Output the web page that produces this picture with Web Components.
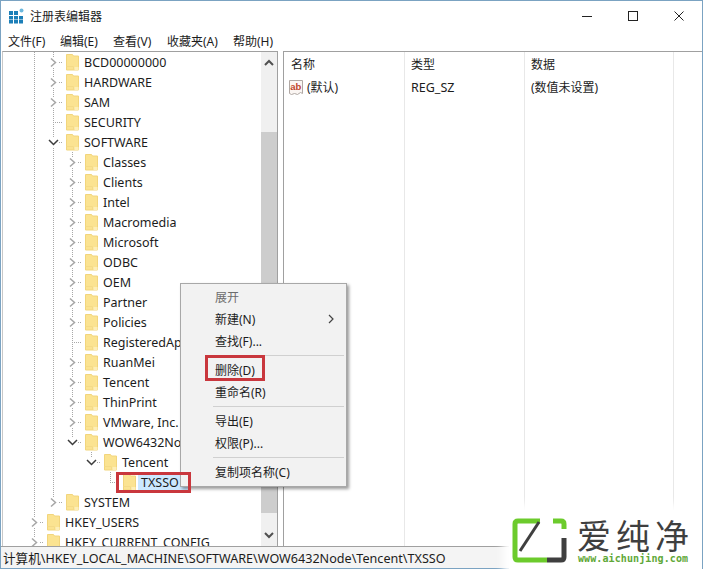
<!DOCTYPE html>
<html lang="zh">
<head>
<meta charset="utf-8">
<title>注册表编辑器</title>
<style>
  html, body { margin: 0; padding: 0; background: #fff; }
  body { width: 703px; height: 569px; overflow: hidden; font: 12px "Noto Sans", "Noto Sans CJK SC", sans-serif; color: #1c1c1c; }
</style>
</head>
<body>
<reg-window>
  <reg-titlebar slot="title">注册表编辑器</reg-titlebar>
  <reg-menubar slot="menu">
    <span style="width:52px">文件(F)</span><span style="width:53px">编辑(E)</span><span style="width:54px">查看(V)</span><span style="width:66px">收藏夹(A)</span><span>帮助(H)</span>
  </reg-menubar>
  <reg-tree slot="tree">
    <tree-row depth="2" state="closed" guides="1">BCD00000000</tree-row>
    <tree-row depth="2" state="closed" guides="1">HARDWARE</tree-row>
    <tree-row depth="2" state="closed" guides="1">SAM</tree-row>
    <tree-row depth="2" guides="1">SECURITY</tree-row>
    <tree-row depth="2" state="open" guides="1">SOFTWARE</tree-row>
    <tree-row depth="3" state="closed" guides="1 2">Classes</tree-row>
    <tree-row depth="3" state="closed" guides="1 2">Clients</tree-row>
    <tree-row depth="3" state="closed" guides="1 2">Intel</tree-row>
    <tree-row depth="3" state="closed" guides="1 2">Macromedia</tree-row>
    <tree-row depth="3" state="closed" guides="1 2">Microsoft</tree-row>
    <tree-row depth="3" state="closed" guides="1 2">ODBC</tree-row>
    <tree-row depth="3" state="closed" guides="1 2">OEM</tree-row>
    <tree-row depth="3" state="closed" guides="1 2">Partner</tree-row>
    <tree-row depth="3" state="closed" guides="1 2">Policies</tree-row>
    <tree-row depth="3" guides="1 2">RegisteredAp</tree-row>
    <tree-row depth="3" state="closed" guides="1 2">RuanMei</tree-row>
    <tree-row depth="3" state="closed" guides="1 2">Tencent</tree-row>
    <tree-row depth="3" state="closed" guides="1 2">ThinPrint</tree-row>
    <tree-row depth="3" state="closed" guides="1 2">VMware, Inc.</tree-row>
    <tree-row depth="3" state="open" guides="1 2" last>WOW6432Node</tree-row>
    <tree-row depth="4" state="open" guides="1 2" last>Tencent</tree-row>
    <tree-row depth="5" guides="1 2" last selected>TXSSO</tree-row>
    <tree-row depth="2" state="closed" guides="1" last>SYSTEM</tree-row>
    <tree-row depth="1" state="closed">HKEY_USERS</tree-row>
    <tree-row depth="1" state="closed">HKEY_CURRENT_CONFIG</tree-row>
  </reg-tree>
  <reg-list slot="list"></reg-list>
  <reg-status slot="status">计算机\HKEY_LOCAL_MACHINE\SOFTWARE\WOW6432Node\Tencent\TXSSO</reg-status>
  <context-menu slot="over">
    <menu-item disabled>展开</menu-item>
    <menu-item arrow>新建(N)</menu-item>
    <menu-item>查找(F)...</menu-item>
    <menu-sep></menu-sep>
    <menu-item>删除(D)</menu-item>
    <menu-item>重命名(R)</menu-item>
    <menu-sep></menu-sep>
    <menu-item>导出(E)</menu-item>
    <menu-item>权限(P)...</menu-item>
    <menu-sep></menu-sep>
    <menu-item>复制项名称(C)</menu-item>
  </context-menu>
  <red-box slot="over" style="left:205px;top:355px;width:60px;height:26px"></red-box>
  <red-box slot="over" style="left:116px;top:472px;width:75px;height:21px"></red-box>
  <site-logo slot="over"></site-logo>
</reg-window>

<script>
  const folderSvg = `<svg width="13" height="18" viewBox="0 0 13 18"><path d="M.5 1.500h6l1 1.500h5v14H.5z" fill="#fbe391" stroke="#f2d57c"/><path d="M.5 13.500h7V17" fill="none" stroke="#f4da88"/><path d="M8.500 14h4v3h-4z" fill="#fdeeb8"/></svg>`;

  class RegWindow extends HTMLElement {
    constructor() {
      super();
      this.attachShadow({ mode: 'open' });
      this.shadowRoot.innerHTML = `
        <style>
          :host { display: grid; position: relative; box-sizing: border-box; width: 703px; height: 569px; background: #fff;
            grid-template-rows: 30px 20px 1fr 23px; grid-template-columns: 277px 1fr;
            border: 1px solid #7ba3c2; border-bottom: 0; overflow: hidden; }
          .title, .menu, .status { grid-column: 1 / 3; }
          .gap { display: flex; min-height: 0; padding-left: 1px; }
          .right { display: flex; min-height: 0; padding-left: 5px; }
        </style>
        <div class="title"><slot name="title"></slot></div>
        <div class="menu"><slot name="menu"></slot></div>
        <div class="gap"><slot name="tree"></slot></div>
        <div class="right"><slot name="list"></slot></div>
        <div class="status"><slot name="status"></slot></div>
        <slot name="over"></slot>
      `;
    }
  }

  class RegTitlebar extends HTMLElement {
    constructor() {
      super();
      this.attachShadow({ mode: 'open' });
      this.shadowRoot.innerHTML = `
        <style>
          :host { display: flex; align-items: center; height: 29px; padding: 0 0 0 8px; font-size: 12px; }
          .name { margin-left: 6px; flex: 1; padding-top: 0; }
          .btn { width: 46px; height: 29px; display: flex; align-items: center; justify-content: center; }
          .controls { display: flex; }
        </style>
        <svg width="15" height="16" viewBox="0 0 15 16">
          <g fill="#1c7fb8"><rect x="0" y="3" width="4" height="4"/><rect x="5" y="3" width="4" height="4"/>
          <rect x="0" y="8" width="4" height="3.500"/><rect x="5" y="8" width="4" height="3.500"/><rect x="10" y="8" width="4" height="3.500"/>
          <rect x="0" y="12" width="4" height="3.500"/><rect x="5" y="12" width="4" height="3.500"/><rect x="10" y="12" width="4" height="3.500"/></g>
          <circle cx="12.500" cy="2.500" r="2" fill="#6cb8de"/>
        </svg>
        <span class="name"><slot></slot></span>
        <div class="controls">
          <div class="btn"><svg width="10" height="10"><path d="M0 5.500h10" stroke="#222"/></svg></div>
          <div class="btn"><svg width="10" height="10"><rect x=".5" y=".5" width="9" height="9" fill="none" stroke="#222"/></svg></div>
          <div class="btn"><svg width="10" height="10"><path d="M.5.500l9 9M9.500.500l-9 9" stroke="#222"/></svg></div>
        </div>
      `;
    }
  }

  class RegMenubar extends HTMLElement {
    constructor() {
      super();
      this.attachShadow({ mode: 'open' });
      this.shadowRoot.innerHTML = `
        <style>
          :host { display: flex; align-items: center; height: 20px; padding-left: 7px; }
          ::slotted(span) { display: block; white-space: nowrap; }
        </style>
        <slot></slot>
      `;
    }
  }

  class RegTree extends HTMLElement {
    constructor() {
      super();
      this.attachShadow({ mode: 'open' });
      this.shadowRoot.innerHTML = `
        <style>
          :host { display: flex; width: 276px; box-sizing: border-box; min-height: 0; border: 1px solid #a0a0a0; border-left-color: #c8c8c8; border-bottom: 0; background: #fff; }
          .rows { flex: 1; min-width: 0; overflow: hidden; padding-left: 3px; }
          .bar { width: 16px; background: #f0f0f0; display: flex; flex-direction: column; align-items: center; }
          .arrow { height: 20px; display: flex; align-items: center; justify-content: center; }
          .space { height: 60px; }
          .thumb { width: 100%; height: 381px; background: #cdcdcd; }
          .down { margin-top: 12px; }
        </style>
        <div class="rows"><slot></slot></div>
        <div class="bar">
          <div class="arrow"><svg width="10" height="7"><path d="M1 6l4-4 4 4" fill="none" stroke="#505050" stroke-width="2"/></svg></div>
          <div class="space"></div>
          <div class="thumb"></div>
          <div class="arrow down"><svg width="10" height="7"><path d="M1 1l4 4 4-4" fill="none" stroke="#505050" stroke-width="2"/></svg></div>
        </div>
      `;
    }
  }

  class TreeRow extends HTMLElement {
    constructor() {
      super();
      this.attachShadow({ mode: 'open' });
    }

    connectedCallback() {
      const depth = Number(this.getAttribute('depth') || 0);
      const guides = (this.getAttribute('guides') || '').split(' ').filter(Boolean).map(Number);
      const state = this.getAttribute('state');
      const isLast = this.hasAttribute('last');
      const selected = this.hasAttribute('selected');

      let cells = '';
      for (let i = 0; i < depth; i++) {
        cells += `<span class="cell ${guides.includes(i) ? 'guide' : ''}"></span>`;
      }
      let chevron = '';
      if (state === 'closed') chevron = `<svg width="9" height="11"><path d="M2 1.500l4.500 4-4.500 4" fill="none" stroke="#a6a6a6" stroke-width="1.500"/></svg>`;
      if (state === 'open') chevron = `<svg width="11" height="9"><path d="M1 2l4.500 4.500L10 2" fill="none" stroke="#3c3c3c" stroke-width="1.500"/></svg>`;

      this.shadowRoot.innerHTML = `
        <style>
          :host { display: flex; align-items: center; height: 20px; white-space: nowrap; font-size: 12.5px; }
          .cell, .twist { flex: none; width: 19px; height: 20px; display: flex; align-items: center; justify-content: center; }
          .guide { background: repeating-linear-gradient(to bottom, #a8a8a8 0 1px, transparent 1px 2px) 9px 0 / 1px 100% no-repeat; }
          .twist { background:
            repeating-linear-gradient(to bottom, #a8a8a8 0 1px, transparent 1px 2px) 9px 0 / 1px ${isLast ? '50%' : '100%'} no-repeat,
            repeating-linear-gradient(to right, #a8a8a8 0 1px, transparent 1px 2px) 9px 10px / 10px 1px no-repeat; }
          .twist svg { background: #fff; }
          .folder { flex: none; width: 13px; height: 18px; margin-left: 3px; display: flex; }
          .text { margin-left: 5px; height: 17px; line-height: 17px; ${selected ? 'background: #cce8ff; margin-left: 2px; padding: 0 9px 0 3px;' : ''} }
        </style>
        ${cells}
        <span class="twist">${chevron}</span>
        <span class="folder">${folderSvg}</span>
        <span class="text"><slot></slot></span>
      `;
    }
  }

  class RegList extends HTMLElement {
    constructor() {
      super();
      this.attachShadow({ mode: 'open' });
      this.shadowRoot.innerHTML = `
        <style>
          :host { display: block; flex: 1; box-sizing: border-box; border: 1px solid #a0a0a0; border-right: 0; border-bottom: 0;
            background:
              linear-gradient(#e8e8e8, #e8e8e8) 120px 0 / 1px 100% no-repeat,
              linear-gradient(#e8e8e8, #e8e8e8) 240px 0 / 1px 100% no-repeat,
              linear-gradient(#e8e8e8, #e8e8e8) 389px 0 / 1px 100% no-repeat; }
          .row { display: grid; grid-template-columns: 120px 120px 1fr; align-items: center; }
          .head { height: 24px; }
          .body { height: 22px; }
          .row > span { padding-left: 7px; display: flex; align-items: center; white-space: nowrap; }
          .ab { margin-left: -3px; margin-right: 3px; flex: none; }
          .latin { font-size: 12.5px; }
        </style>
        <div class="row head"><span>名称</span><span>类型</span><span>数据</span></div>
        <div class="row body">
          <span><svg class="ab" width="16" height="17" viewBox="0 0 16 17"><path d="M1.500 1.500h13v13l-2-1-3 2-3-1-3 1-2-1z" fill="#fbf6f3" stroke="#b0a8a4"/><text x="2.300" y="10.500" font-family="Liberation Sans" font-size="9.500" font-weight="bold" fill="#c0452c">ab</text></svg>(默认)</span>
          <span class="latin">REG_SZ</span>
          <span>(数值未设置)</span>
        </div>
      `;
    }
  }

  class RegStatus extends HTMLElement {
    constructor() {
      super();
      this.attachShadow({ mode: 'open' });
      this.shadowRoot.innerHTML = `
        <style>
          :host { display: flex; align-items: center; height: 23px; box-sizing: border-box; padding-left: 2px; border-top: 1px solid #a0a0a0; border-bottom: 1px solid #7ba3c2; background: #f4f4f4; white-space: nowrap; font-size: 12.6px; }
        </style>
        <slot></slot>
      `;
    }
  }

  class ContextMenu extends HTMLElement {
    constructor() {
      super();
      this.attachShadow({ mode: 'open' });
      this.shadowRoot.innerHTML = `
        <style>
          :host { display: block; position: absolute; left: 179px; top: 282px; width: 167px; height: 204px; box-sizing: border-box;
            padding: 2px 1px 3px; background: #f2f2f2; border: 1px solid #a8a8a8; box-shadow: 2px 2px 3px rgba(0,0,0,.4); }
        </style>
        <slot></slot>
      `;
    }
  }

  class MenuItem extends HTMLElement {
    constructor() {
      super();
      this.attachShadow({ mode: 'open' });
    }

    connectedCallback() {
      const disabled = this.hasAttribute('disabled');
      const arrow = this.hasAttribute('arrow');
      this.shadowRoot.innerHTML = `
        <style>
          :host { display: flex; align-items: center; justify-content: space-between; height: 22px; padding: 0 11px 0 33px; color: ${disabled ? '#6d6d6d' : '#1c1c1c'}; }
        </style>
        <span><slot></slot></span>
        ${arrow ? '<svg width="6" height="10"><path d="M1 1l4 4-4 4" fill="none" stroke="#444" stroke-width="1.200"/></svg>' : ''}
      `;
    }
  }

  class MenuSep extends HTMLElement {
    constructor() {
      super();
      this.attachShadow({ mode: 'open' });
      this.shadowRoot.innerHTML = `
        <style>
          :host { display: block; height: 7px; margin-left: 31px; margin-right: 1px; box-sizing: border-box; padding-top: 3px; }
          div { height: 1px; background: #d0d0d0; }
        </style>
        <div></div>
      `;
    }
  }

  class RedBox extends HTMLElement {
    constructor() {
      super();
      this.attachShadow({ mode: 'open' });
      this.shadowRoot.innerHTML = `
        <style>
          :host { display: block; position: absolute; box-sizing: border-box; margin: -1px 0 0 -1px; border: 3px solid #c9373d; }
        </style>
      `;
    }
  }

  class SiteLogo extends HTMLElement {
    constructor() {
      super();
      this.attachShadow({ mode: 'open' });
      this.shadowRoot.innerHTML = `
        <style>
          :host { display: flex; position: absolute; right: 0; bottom: 0; width: 193px; height: 59px; box-sizing: border-box; padding: 8px 0 0 3px; gap: 11px;
            background: #fff; box-shadow: 0 0 8px 6px #fff; }
          .words { display: flex; flex-direction: column; }
          .big { font: 34px/34px "Noto Sans CJK SC", sans-serif; height: 36px; letter-spacing: 5px; color: #3f3f3f; white-space: nowrap; margin-left: -1px; }
          .url { font: bold 10px/10px "DejaVu Sans Mono", monospace; letter-spacing: .1px; color: #5fa838; white-space: nowrap; }
        </style>
        <svg width="55" height="45" viewBox="0 0 55 45" style="flex:none">
          <path d="M35 42H6Q3 42 3 39V6Q3 3 6 3H28" fill="none" stroke="#6ccb2c" stroke-width="5"/>
          <path d="M41 3h8q3 0 3 3v5" fill="none" stroke="#6ccb2c" stroke-width="5"/>
          <path d="M52 20v19q0 3-3 3H35" fill="none" stroke="#3f3f3f" stroke-width="5"/>
          <path d="M27 4L8 33" fill="none" stroke="#3f3f3f" stroke-width="3"/>
        </svg>
        <div class="words">
          <span class="big">爱纯净</span>
          <span class="url">www.aichunjing.com</span>
        </div>
      `;
    }
  }

  customElements.define('reg-window', RegWindow);
  customElements.define('reg-titlebar', RegTitlebar);
  customElements.define('reg-menubar', RegMenubar);
  customElements.define('reg-tree', RegTree);
  customElements.define('tree-row', TreeRow);
  customElements.define('reg-list', RegList);
  customElements.define('reg-status', RegStatus);
  customElements.define('context-menu', ContextMenu);
  customElements.define('menu-item', MenuItem);
  customElements.define('menu-sep', MenuSep);
  customElements.define('red-box', RedBox);
  customElements.define('site-logo', SiteLogo);
</script>
</body>
</html>
